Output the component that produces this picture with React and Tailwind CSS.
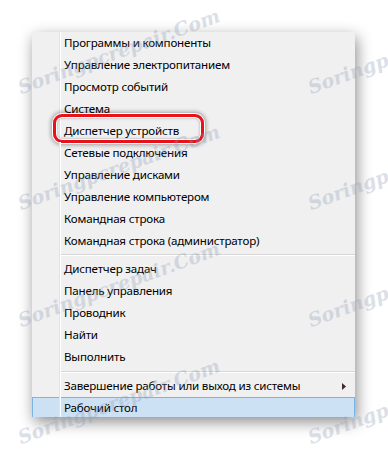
import React from 'react'

const groups = [
  [
    'Программы и компоненты',
    'Управление электропитанием',
    'Просмотр событий',
    'Система',
    'Диспетчер устройств',
    'Сетевые подключения',
    'Управление дисками',
    'Управление компьютером',
    'Командная строка',
    'Командная строка (администратор)',
  ],
  ['Диспетчер задач', 'Панель управления', 'Проводник', 'Найти', 'Выполнить'],
]

// watermark tiles, bottom-left anchor of each
const marks = [
  [22, 97], [312, 97],
  [22, 213], [312, 213],
  [22, 330], [312, 330],
  [22, 447], [312, 447],
]

const Gutter = () => (
  <>
    <div className="w-[27px] shrink-0" />
    <div className="w-[2px] shrink-0 border-l border-l-[#e2e3e3] border-r border-r-white" />
  </>
)

const Row = ({ label, hover, arrow, circled }) => (
  <div
    className={`relative flex h-[22px] items-stretch ${
      hover ? 'bg-[#cde1f4] shadow-[inset_0_0_0_1px_#7db2e7]' : ''
    }`}
  >
    <Gutter />
    <div className="flex flex-1 items-center pl-[3px] text-[11.6px] tracking-[-0.2px] text-black">
      {label}
      {arrow && (
        <svg width="4" height="7" viewBox="0 0 4 7" className="ml-auto mr-[9px]">
          <path d="M0 0 L4 3.5 L0 7 Z" fill="#3a2a2a" />
        </svg>
      )}
    </div>
    {circled && (
      <div className="absolute left-[21px] top-[-6px] h-[29px] w-[151px] rounded-[9px] border-[3px] border-[#e8121b] shadow-[0_0_0_1px_#fff,0_0_4px_2px_rgba(0,0,0,0.35),inset_0_0_0_1px_#fff,inset_0_0_3px_1px_rgba(0,0,0,0.3)]" />
    )}
  </div>
)

const Separator = ({ h }) => (
  <div className={`flex ${h}`}>
    <Gutter />
    <div className="flex flex-1 flex-col justify-center">
      <div className="h-[1px] bg-[#d7d7d7]" />
      <div className="h-[1px] bg-white" />
    </div>
  </div>
)

export default function App() {
  return (
    <div
      className="relative h-[450px] w-[388px] overflow-hidden bg-white pl-[32px] pt-[32px]"
      style={{ fontFamily: '"Noto Sans", "Open Sans", sans-serif' }}
    >
      <div className="h-[385px] w-[323px] overflow-hidden bg-[#f0f0f0] shadow-[2px_5px_14px_rgba(0,0,0,0.45)]">
        {groups[0].map((t) => (
          <Row key={t} label={t} circled={t === 'Диспетчер устройств'} />
        ))}
        <Separator h="h-[6px]" />
        {groups[1].map((t) => (
          <Row key={t} label={t} />
        ))}
        <Separator h="h-[7px]" />
        <Row label="Завершение работы или выход из системы" arrow />
        <Row label="Рабочий стол" hover />
      </div>

      {marks.map(([x, y]) => (
        <div
          key={`${x}-${y}`}
          className="pointer-events-none absolute origin-bottom-left -rotate-[20deg] whitespace-nowrap text-[19px] font-bold italic leading-none text-[#8a9ab6] opacity-30"
          style={{ left: x, top: y - 19, fontFamily: '"DejaVu Serif", serif' }}
        >
          Soringpcrepair.Com
        </div>
      ))}
    </div>
  )
}
